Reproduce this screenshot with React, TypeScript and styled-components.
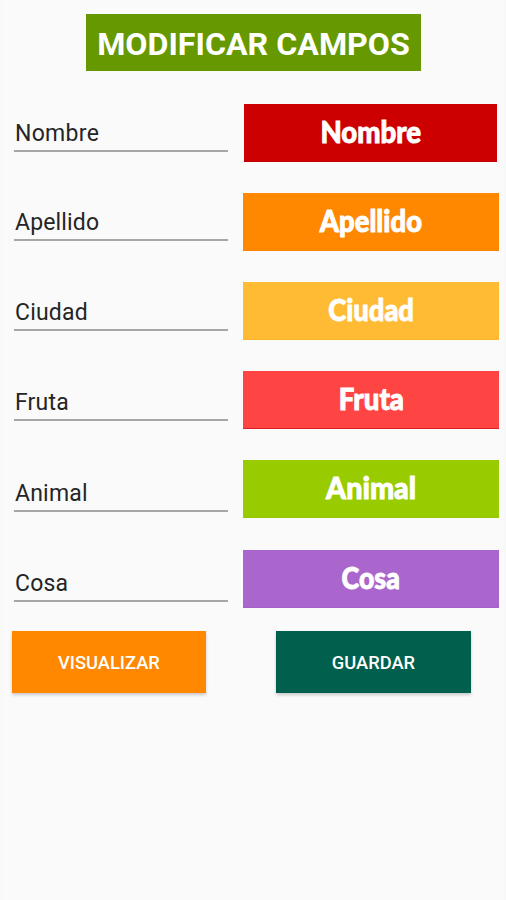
import React from "react";
import styled, { createGlobalStyle } from "styled-components";

const GlobalStyle = createGlobalStyle`
  * { box-sizing: border-box; }
  body { margin: 0; background: #fafafa; }
`;

const Screen = styled.main`
  display: flex;
  flex-direction: column;
  width: 506px;
  height: 900px;
  overflow: hidden;
  background: #fafafa;
  border-left: 4px solid #f9f9f9;
  border-right: 2px solid #f8f8f8;
  font-family: Roboto, "Liberation Sans", sans-serif;
`;

const Title = styled.h1`
  flex: none;
  width: 335px;
  height: 57.5px;
  margin: 13.5px 0 0 82px;
  background: #669900;
  color: #fff;
  font-size: 32.2px;
  font-weight: 700;
  line-height: 61px;
  text-align: center;
  white-space: nowrap;
`;

const Form = styled.section`
  flex: none;
  display: grid;
  grid-template-columns: 214px 256px;
  column-gap: 15px;
  height: 560px;
  padding: 33px 0 0 10px;
`;

const Column = styled.div`
  display: flex;
  flex-direction: column;
`;

const Field = styled.input<{ $height: number; $spacing: number }>`
  flex: none;
  width: 214px;
  height: ${(p) => p.$height}px;
  padding: ${(p) => p.$height - 36}px 0 0 1px;
  border: 0;
  border-bottom: 2px solid #a6a6a6;
  border-radius: 0;
  outline: 0;
  background: transparent;
  color: #252525;
  font: 400 23px/34px Roboto, "Liberation Sans", sans-serif;
  letter-spacing: ${(p) => p.$spacing}px;
`;

const Swatch = styled.div<{ $color: string; $edge: string; $inset?: boolean }>`
  flex: none;
  display: flex;
  justify-content: center;
  width: ${(p) => (p.$inset ? 253 : 256)}px;
  height: 58px;
  margin: 0 0 31.12px ${(p) => (p.$inset ? 1 : 0)}px;
  background: ${(p) => p.$color};
  box-shadow: inset 0 -1px ${(p) => p.$edge};
`;

const SwatchLabel = styled.span<{ $stretch: number }>`
  color: #fff;
  font: 900 30px/54px Lato, "Open Sans", sans-serif;
  -webkit-text-stroke: 0.9px #fff;
  transform: scaleX(${(p) => p.$stretch});
`;

const Actions = styled.div`
  display: flex;
  gap: 70px;
  padding-left: 7.7px;
`;

const ActionButton = styled.button<{ $color: string }>`
  width: 194.5px;
  height: 62px;
  padding: 2px 0 0;
  border: 0;
  background: ${(p) => p.$color};
  box-shadow: 0 2px 3px rgba(0, 0, 0, 0.2);
  color: #fff;
  font: 500 18.3px/60px Roboto, "Liberation Sans", sans-serif;
`;

const items = [
  { name: "Nombre", color: "#cc0000", edge: "#c40000", height: 48, spacing: 0.3, stretch: 0.92 },
  { name: "Apellido", color: "#ff8800", edge: "#f98400", height: 89, spacing: 0.15, stretch: 0.915 },
  { name: "Ciudad", color: "#ffbb33", edge: "#ffb626", height: 90, spacing: 0.2, stretch: 0.91 },
  { name: "Fruta", color: "#ff4444", edge: "#dd1e22", height: 90, spacing: 0.2, stretch: 0.92 },
  { name: "Animal", color: "#99cc00", edge: "#94c700", height: 91, spacing: 0.2, stretch: 0.955 },
  { name: "Cosa", color: "#aa66cc", edge: "#a45fc8", height: 90, spacing: 0.2, stretch: 0.89 },
];

export default function App() {
  return (
    <>
      <GlobalStyle />
      <Screen>
        <Title>MODIFICAR CAMPOS</Title>
        <Form>
          <Column>
            {items.map((item) => (
              <Field
                key={item.name}
                aria-label={item.name}
                defaultValue={item.name}
                $height={item.height}
                $spacing={item.spacing}
              />
            ))}
          </Column>
          <Column>
            {items.map((item, index) => (
              <Swatch key={item.name} $color={item.color} $edge={item.edge} $inset={index === 0}>
                <SwatchLabel $stretch={item.stretch}>{item.name}</SwatchLabel>
              </Swatch>
            ))}
          </Column>
        </Form>
        <Actions>
          <ActionButton $color="#ff8800">VISUALIZAR</ActionButton>
          <ActionButton $color="#00604d">GUARDAR</ActionButton>
        </Actions>
      </Screen>
    </>
  );
}
